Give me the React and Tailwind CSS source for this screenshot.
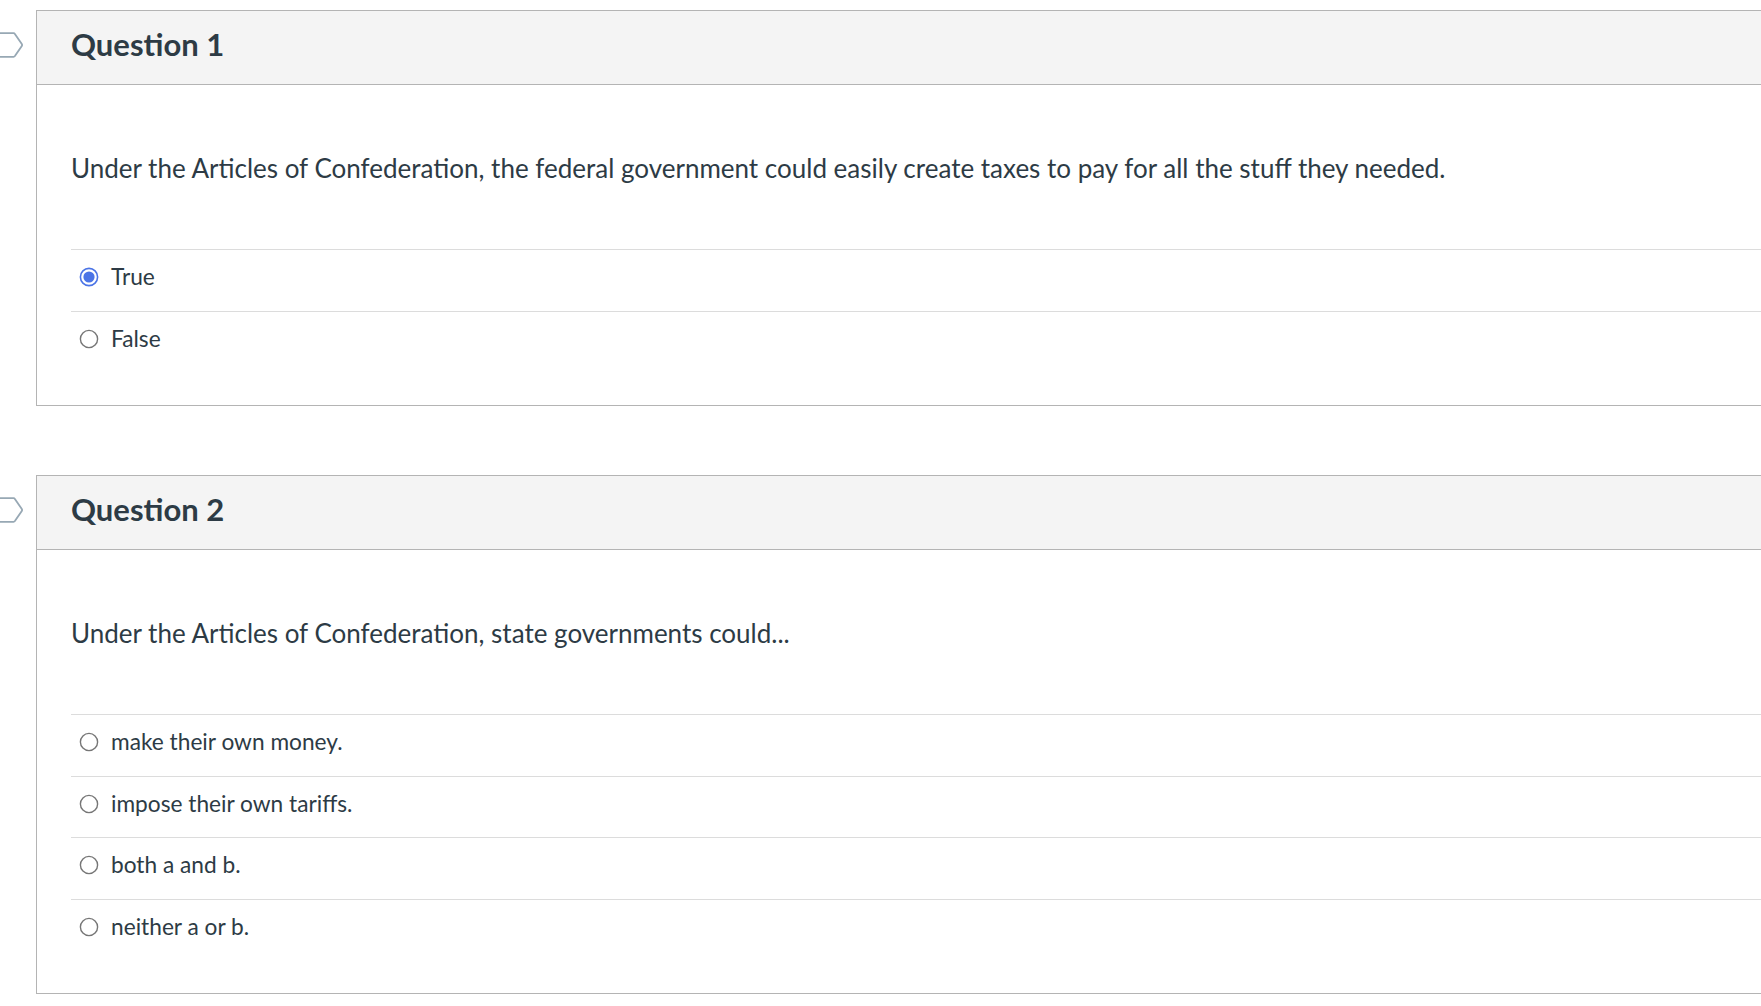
import React from "react";

function Tag() {
  return (
    <svg className="absolute left-[-37px] top-[21px]" width="26" height="28" viewBox="0 0 26 28">
      <path d="M-4 1.2 H13.6 Q14.4 1.2 14.9 1.9 L21.8 12.1 Q22.4 13 21.8 13.9 L14.9 24.1 Q14.4 24.8 13.6 24.8 H-4" fill="none" stroke="#97a8b4" strokeWidth="1.8" strokeLinejoin="round" />
    </svg>
  );
}

function Radio({ checked }) {
  return (
    <svg width="20" height="20" viewBox="0 0 20 20" className="shrink-0">
      {checked ? (
        <>
          <circle cx="10" cy="10" r="8.6" fill="white" stroke="#4b74e6" strokeWidth="1.6" />
          <circle cx="10" cy="10" r="5.6" fill="#4b74e6" />
        </>
      ) : (
        <circle cx="10" cy="10" r="8.6" fill="white" stroke="#767676" strokeWidth="1.4" />
      )}
    </svg>
  );
}

function Question({ title, text, answers, selected }) {
  return (
    <div className="relative ml-[36px] w-[1760px] border border-[#b4b4b4] bg-white">
      <Tag />
      <div className="h-[74px] bg-[#f4f4f4] border-b border-[#b4b4b4] px-[34px] flex items-center">
        <h2 className="text-[31px] font-bold text-[#2d3b45] leading-none pb-[6px]">{title}</h2>
      </div>
      <div className="pl-[34px] pb-[33px]">
        <div className="h-[164px] flex items-center pt-[2px]">
          <p className="text-[26px] text-[#2d3b45]">{text}</p>
        </div>
        {answers.map((a, i) => (
          <div key={i} className="h-[61.5px] border-t border-[#dcdcdc] flex items-center pl-[8px] pb-[6px] gap-[12px]">
            <Radio checked={i === selected} />
            <span className="text-[22.7px] text-[#2d3b45]">{a}</span>
          </div>
        ))}
      </div>
    </div>
  );
}

export default function App() {
  return (
    <div className="min-h-screen bg-white overflow-hidden pt-[10px] font-['Lato','Noto_Sans',sans-serif]">
      <Question
        title="Question 1"
        text="Under the Articles of Confederation, the federal government could easily create taxes to pay for all the stuff they needed."
        answers={["True", "False"]}
        selected={0}
      />
      <div className="h-[69px]" />
      <Question
        title="Question 2"
        text="Under the Articles of Confederation, state governments could..."
        answers={["make their own money.", "impose their own tariffs.", "both a and b.", "neither a or b."]}
        selected={-1}
      />
    </div>
  );
}
